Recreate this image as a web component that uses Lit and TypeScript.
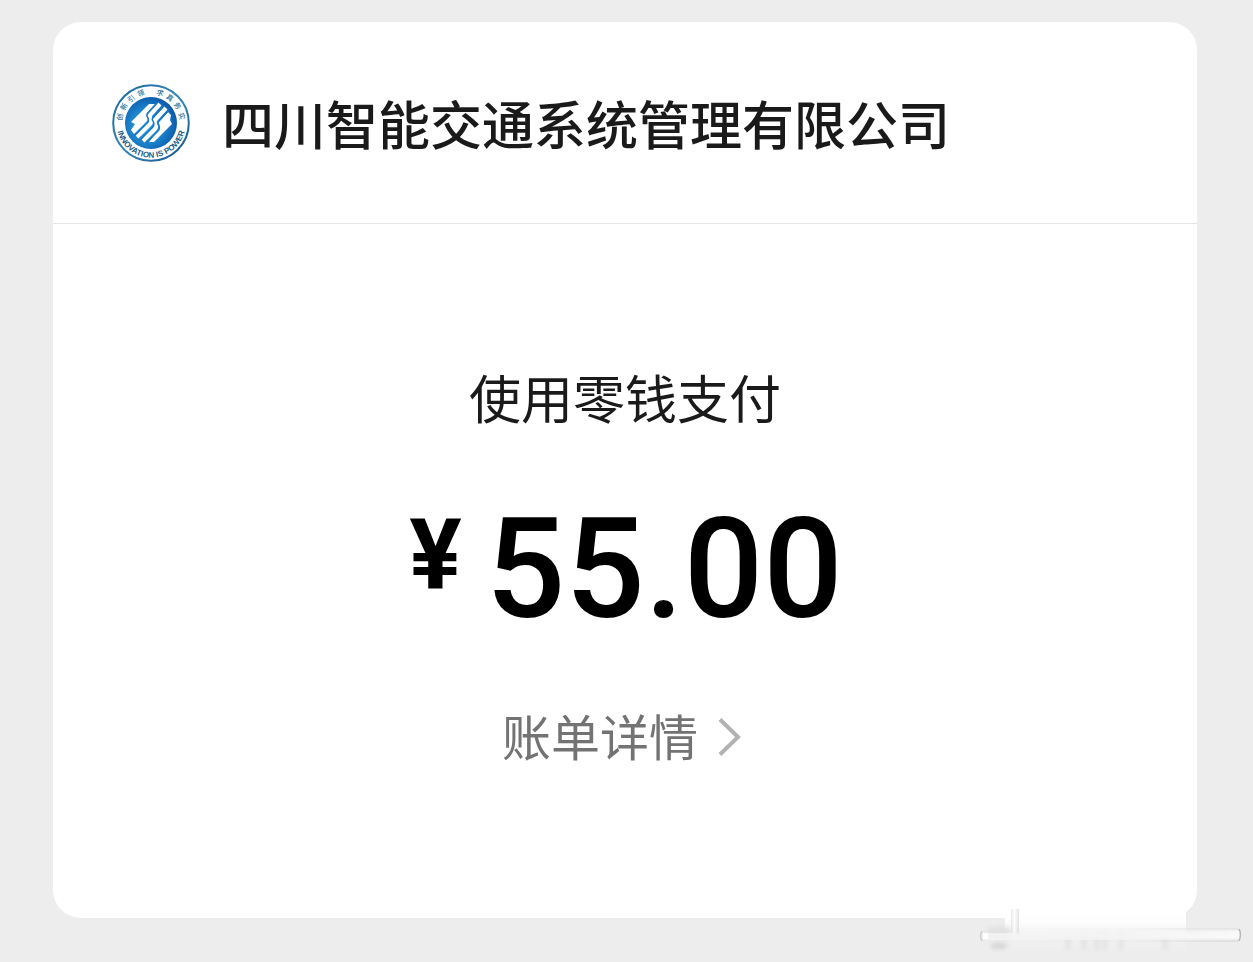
import { LitElement, html, css } from "lit";
import { customElement } from "lit/decorators.js";

@customElement("company-seal")
class CompanySeal extends LitElement {
  static styles = css`
    :host { display: block; width: 78px; height: 78px; flex: none; }
    svg { display: block; width: 100%; height: 100%; }
    .motto { font: 500 7px "Noto Sans CJK SC", sans-serif; fill: #2a7099; }
    .english { font: 700 8px "Liberation Sans", Arial, sans-serif; fill: #1b5c88; }
  `;

  render() {
    return html`
      <svg viewBox="0 0 78 78" role="img" aria-label="公司标志">
        <defs>
          <radialGradient id="disc" cx="42%" cy="56%" r="58%">
            <stop offset="0" stop-color="#35aee6" />
            <stop offset="0.6" stop-color="#1a80c8" />
            <stop offset="1" stop-color="#0d5aad" />
          </radialGradient>
          <linearGradient id="ring" x1="0" y1="0" x2="1" y2="1">
            <stop offset="0" stop-color="#14669f" />
            <stop offset="0.5" stop-color="#3388b8" />
            <stop offset="1" stop-color="#174f86" />
          </linearGradient>
          <path id="left" d="M10 39A29 29 0 0 1 39 10" />
          <path id="right" d="M39 10A29 29 0 0 1 68 39L68 45" />
          <path id="bottom" d="M4.740 34A34.620 34.620 0 1 0 73.260 34" />
        </defs>
        <circle cx="39" cy="39" r="37.800" fill="#fff" stroke="url(#ring)" stroke-width="2" />
        <circle cx="39" cy="39" r="26" fill="url(#disc)" />
        <path d="M19 38L37 20h6l-8 9 1 7-14 14-3-4 4-6z" fill="#fff" />
        <path d="M56 28l3 3-1 5 2 4-18 18h-5l11-14-1-6z" fill="#fff" />
        <g fill="none" stroke="#fff" stroke-width="4.200" stroke-linejoin="round">
          <path d="M48 20L38 31q-1 2 1 4 1 3-1 5L25 53" />
          <path d="M54 24L43 36q-1 2 1 4 1 3-1 5L31 57" />
        </g>
        <g fill="none" stroke="#1679c2" stroke-width="1.500" stroke-linejoin="round">
          <path d="M45 19L35 30q-1 2 1 4 1 3-1 5L22 52" />
          <path d="M51 22L40.500 34q-1 2 1 4 1 3-1 5L28 56" />
          <path d="M57 26L46 38q-1 2 1 4 1 3-1 5L34 59" />
        </g>
        <text class="motto"><textPath href="#left" startOffset="2">创&#160; 新&#160; 引&#160; 领</textPath></text>
        <text class="motto"><textPath href="#right" startOffset="5">求&#160; 真&#160; 务&#160; 实</textPath></text>
        <text class="english" text-anchor="middle"><textPath href="#bottom" startOffset="50%">INNOVATION IS POWER</textPath></text>
      </svg>
    `;
  }
}

@customElement("corner-smudge")
class CornerSmudge extends LitElement {
  static styles = css`
    :host { display: block; width: 275px; height: 54px; }
    svg { display: block; width: 100%; height: 100%; }
  `;

  render() {
    return html`
      <svg viewBox="0 0 275 54" aria-hidden="true">
        <defs>
          <linearGradient id="fade" x1="0" y1="0" x2="0" y2="1">
            <stop offset="0" stop-color="#fff" />
            <stop offset="0.250" stop-color="#fdfdfd" />
            <stop offset="0.600" stop-color="#f1f1f1" />
            <stop offset="1" stop-color="#ededed" />
          </linearGradient>
          <linearGradient id="bar" x1="0" y1="0" x2="0" y2="1">
            <stop offset="0" stop-color="#dedede" />
            <stop offset="0.250" stop-color="#f8f8f8" />
            <stop offset="0.700" stop-color="#fafafa" />
            <stop offset="1" stop-color="#d6d6d6" />
          </linearGradient>
          <linearGradient id="reveal">
            <stop offset="0" stop-color="#fff" stop-opacity="0" />
            <stop offset="0.550" stop-color="#fff" stop-opacity="0.100" />
            <stop offset="1" stop-color="#fff" />
          </linearGradient>
          <linearGradient id="post">
            <stop offset="0" stop-color="#d8d8d8" />
            <stop offset="0.400" stop-color="#fff" />
            <stop offset="1" stop-color="#d2d2d2" />
          </linearGradient>
          <mask id="mask"><rect width="275" height="54" fill="url(#reveal)" /></mask>
          <filter id="soft" x="-30%" y="-60%" width="160%" height="220%"><feGaussianBlur stdDeviation="2" /></filter>
        </defs>
        <rect x="30" y="6" width="181" height="44" fill="url(#fade)" />
        <g filter="url(#soft)">
          <ellipse cx="24" cy="42" rx="9" ry="3" fill="#d4d4d4" />
          <ellipse cx="24" cy="28" rx="13" ry="6" fill="#e2e2e2" />
          <path d="M93 32v14M109 30v16M122 30v16M130 30v16M146 30v16M190 32v14" stroke="#e3e3e3" stroke-width="5" />
        </g>
        <rect x="36" y="5" width="8" height="26" fill="url(#post)" opacity="0.600" />
        <rect x="10" y="29" width="252" height="7" fill="#f4f4f4" opacity="0.800" />
        <rect x="9" y="24" width="255" height="14" rx="3" fill="url(#bar)" mask="url(#mask)" />
        <rect x="8" y="29" width="5" height="6" fill="#fff" />
        <path d="M7 27q-3 5 0 10" fill="none" stroke="#d0d0d0" stroke-width="1.500" />
        <path d="M264 25q3 5 0 12" fill="none" stroke="#b9b9b9" stroke-width="1.500" />
      </svg>
    `;
  }
}

@customElement("app-root")
class AppRoot extends LitElement {
  static styles = css`
    :host {
      display: block;
      box-sizing: border-box;
      position: relative;
      min-height: 100vh;
      padding: 22px 56px 44px 53px;
      background: #ededed;
      color: #1a1a1a;
      font-family: "Noto Sans CJK SC", sans-serif;
    }
    .card { background: #fff; border-radius: 28px; }
    .merchant {
      display: flex;
      align-items: center;
      gap: 32px;
      padding: 61px 59px 60px;
      border-bottom: 1px solid #e5e5e5;
    }
    h1 { margin: 0; font-size: 52px; line-height: 80px; font-weight: 500; }
    .payment {
      display: flex;
      flex-direction: column;
      align-items: center;
      padding: 133px 24px 146px;
    }
    .method { margin: 0; font-size: 52px; line-height: 80px; }
    .amount {
      display: flex;
      align-items: flex-start;
      gap: 24px;
      margin: 50px 0 47px;
      padding-left: 2px;
      color: #000;
      font-family: Roboto, sans-serif;
    }
    .currency { padding-top: 19px; font-size: 98px; line-height: 100px; font-weight: 700; }
    .value { font-size: 140px; line-height: 164px; font-weight: 500; }
    .details {
      display: flex;
      align-items: center;
      gap: 20px;
      padding-right: 6px;
      color: #737373;
      font-size: 49px;
      line-height: 74px;
      text-decoration: none;
    }
    .chevron { display: block; width: 24px; height: 40px; margin-top: 4px; }
    .smudge { position: absolute; right: 3px; bottom: 4px; }
  `;

  render() {
    return html`
      <main class="card">
        <header class="merchant">
          <company-seal></company-seal>
          <h1>四川智能交通系统管理有限公司</h1>
        </header>
        <section class="payment">
          <p class="method">使用零钱支付</p>
          <div class="amount">
            <span class="currency">¥</span>
            <span class="value">55.00</span>
          </div>
          <a class="details" href="#details">
            账单详情
            <svg class="chevron" viewBox="0 0 24 40" aria-hidden="true">
              <path d="M2 2.500L20 20 2 37.500" fill="none" stroke="#b2b2b2" stroke-width="4" />
            </svg>
          </a>
        </section>
      </main>
      <corner-smudge class="smudge"></corner-smudge>
    `;
  }
}
